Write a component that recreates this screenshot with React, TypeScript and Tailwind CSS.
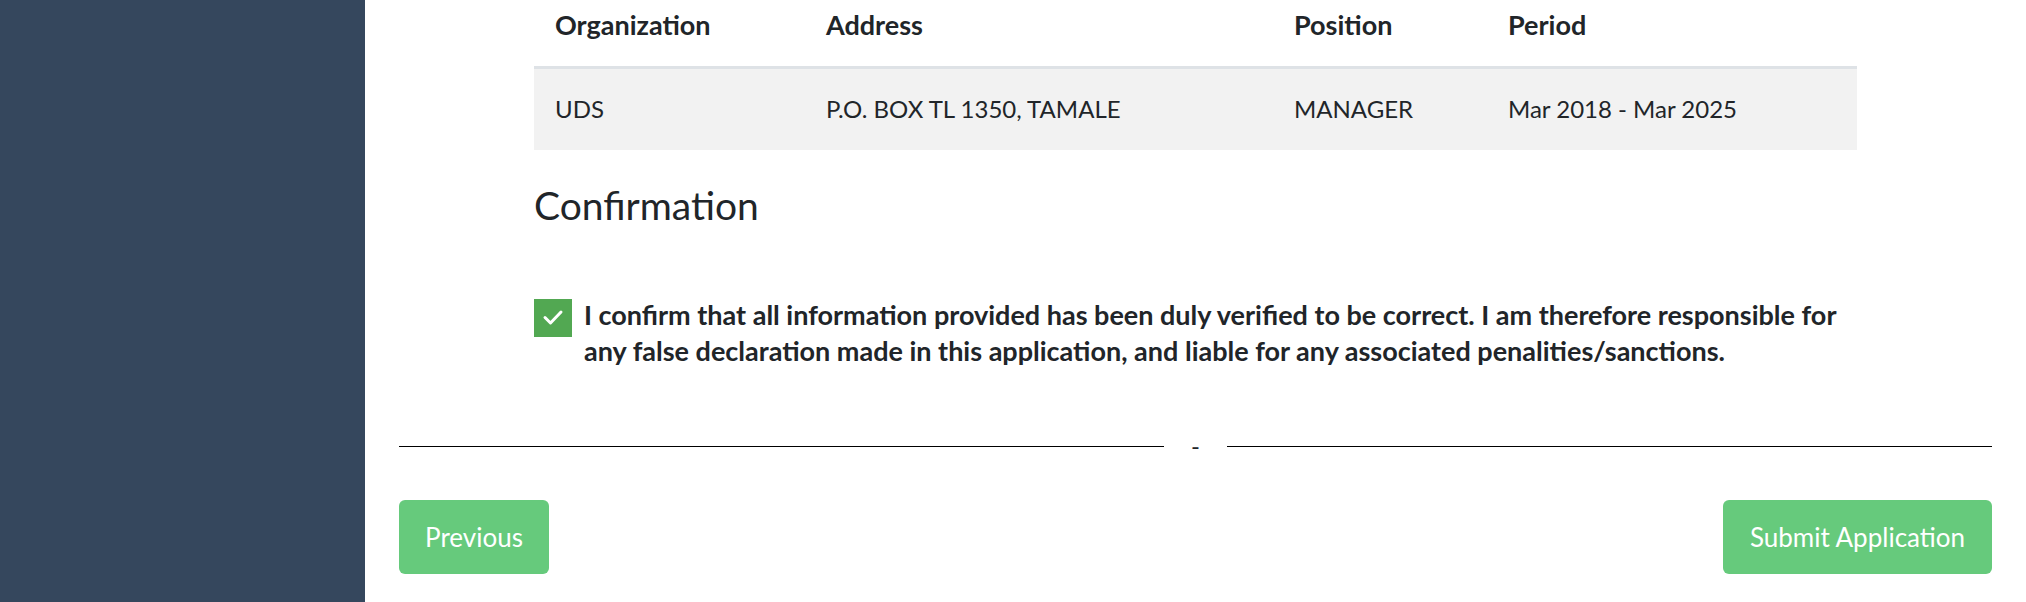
import React, { useState } from 'react';

type Employment = {
  organization: string;
  address: string;
  position: string;
  period: string;
};

const employment: Employment[] = [
  {
    organization: 'UDS',
    address: 'P.O. BOX TL 1350, TAMALE',
    position: 'MANAGER',
    period: 'Mar 2018 - Mar 2025',
  },
];

const App: React.FC = () => {
  const [confirmed, setConfirmed] = useState(true);

  return (
    <div className="flex min-h-screen overflow-hidden bg-white font-['Lato','Liberation_Sans',sans-serif] text-[#212529]">
      <aside className="w-[365px] shrink-0 bg-[#35475d]" />

      <main className="flex-1 px-[34px]">
        <div className="px-[135px]">
          <table className="-mt-[15px] w-full border-collapse text-left text-[24px] leading-[36px]">
            <thead>
              <tr className="border-b-[3px] border-[#dee2e6] text-[27px]">
                <th className="w-[271px] px-[21px] pt-[22px] pb-[23px] font-bold">Organization</th>
                <th className="w-[468px] px-[21px] pt-[22px] pb-[23px] font-bold">Address</th>
                <th className="w-[214px] px-[21px] pt-[22px] pb-[23px] font-bold">Position</th>
                <th className="px-[21px] pt-[22px] pb-[23px] font-bold">Period</th>
              </tr>
            </thead>
            <tbody>
              {employment.map((row) => (
                <tr key={row.organization} className="bg-[#f2f2f2]">
                  <td className="px-[21px] pt-[22px] pb-[23px]">{row.organization}</td>
                  <td className="px-[21px] pt-[22px] pb-[23px]">{row.address}</td>
                  <td className="px-[21px] pt-[22px] pb-[23px]">{row.position}</td>
                  <td className="px-[21px] pt-[22px] pb-[23px]">{row.period}</td>
                </tr>
              ))}
            </tbody>
          </table>

          <h3 className="mt-[30px] text-[39px] leading-[50px] font-normal">Confirmation</h3>

          <label className="mt-[70px] flex cursor-pointer items-start gap-[12px]">
            <button
              type="button"
              onClick={() => setConfirmed((value) => !value)}
              className={`mt-[-1px] flex h-[38px] w-[38px] shrink-0 items-center justify-center ${
                confirmed ? 'bg-[#52a852]' : 'border-2 border-[#52a852] bg-white'
              }`}
            >
              {confirmed && (
                <svg viewBox="0 0 38 38" className="h-[38px] w-[38px]">
                  <polyline
                    points="11,18.5 16.5,24 27,13"
                    fill="none"
                    stroke="#ffffff"
                    strokeWidth="3"
                    strokeLinecap="round"
                    strokeLinejoin="round"
                  />
                </svg>
              )}
            </button>
            <span className="-mt-[3px] text-[27px] leading-[36px] font-bold">
              I confirm that all information provided has been duly verified to be correct. I am therefore responsible for
              <br />
              any false declaration made in this application, and liable for any associated penalities/sanctions.
            </span>
          </label>
        </div>

        <div className="mt-[59px] flex items-center">
          <div className="h-px flex-1 bg-black" />
          <span className="w-[63px] text-center text-[24px] leading-[36px] text-[#212529]">-</span>
          <div className="h-px flex-1 bg-black" />
        </div>

        <div className="mt-[36px] flex justify-between">
          <button
            type="button"
            className="h-[74px] w-[150px] rounded-[6px] bg-[#66ca7c] text-[26px] text-white"
          >
            Previous
          </button>
          <button
            type="button"
            className="h-[74px] w-[269px] rounded-[6px] bg-[#66ca7c] text-[26px] text-white"
          >
            Submit Application
          </button>
        </div>
      </main>
    </div>
  );
};

export default App;
